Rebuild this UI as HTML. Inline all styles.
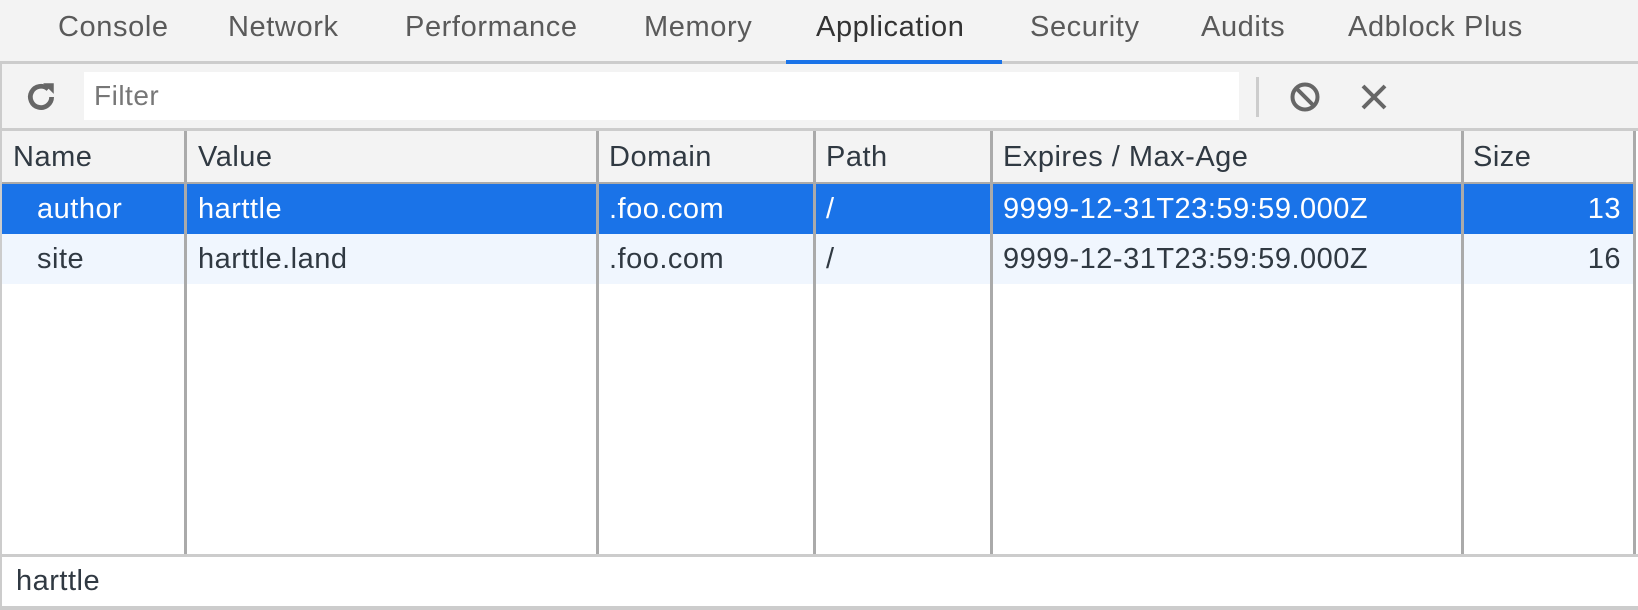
<!DOCTYPE html>
<html><head><style>
*{margin:0;padding:0;box-sizing:border-box}
body{width:1638px;height:610px;background:#fff;font-family:"Liberation Sans",sans-serif;position:relative;overflow:hidden;color:#303942}
.a{position:absolute}
.tab{position:absolute;top:11px;font-size:29px;letter-spacing:0.6px;color:#5a5a5a;white-space:nowrap}
.t{position:absolute;font-size:29px;letter-spacing:0.5px;white-space:nowrap;line-height:50px}
.vl{position:absolute;top:131px;width:3px;height:424px;background:#aaa}
</style></head><body>
<div class="a" style="left:0;top:0;width:1638px;height:61px;background:#f3f3f3"></div>
<div class="tab" style="left:58px">Console</div>
<div class="tab" style="left:228px">Network</div>
<div class="tab" style="left:405px">Performance</div>
<div class="tab" style="left:644px">Memory</div>
<div class="tab" style="left:816px;color:#333">Application</div>
<div class="tab" style="left:1030px">Security</div>
<div class="tab" style="left:1201px">Audits</div>
<div class="tab" style="left:1348px">Adblock Plus</div>
<div class="a" style="left:0;top:61px;width:1638px;height:3px;background:#ccc"></div>
<div class="a" style="left:786px;top:60px;width:216px;height:4px;background:#1a73e8"></div>
<div class="a" style="left:0;top:64px;width:1638px;height:64px;background:#f3f3f3;border-left:2px solid #ccc"></div>
<svg class="a" style="left:24px;top:80px" width="34" height="34" viewBox="0 0 32 32"><path d="M26 16a10 10 0 1 1-3.2-7.4" fill="none" stroke="#666" stroke-width="4.5"/><path d="M18 3h10v10z" fill="#666"/></svg>
<div class="a" style="left:84px;top:72px;width:1155px;height:48px;background:#fff"></div>
<div class="a" style="left:94px;top:72px;font-size:28px;letter-spacing:0.5px;line-height:48px;color:#777">Filter</div>
<div class="a" style="left:1256px;top:77px;width:3px;height:40px;background:#ccc"></div>
<svg class="a" style="left:1289px;top:81px" width="32" height="32" viewBox="0 0 32 32"><circle cx="16" cy="16" r="12.5" fill="none" stroke="#666" stroke-width="4"/><path d="M8 8l16 16" stroke="#666" stroke-width="4"/></svg>
<svg class="a" style="left:1360px;top:83px" width="28" height="28" viewBox="0 0 28 28"><path d="M3 3l22 22M25 3L3 25" stroke="#666" stroke-width="4"/></svg>
<div class="a" style="left:0;top:128px;width:1638px;height:3px;background:#ccc"></div>
<div class="a" style="left:0;top:131px;width:1635px;height:51px;background:#f3f3f3"></div>
<div class="a" style="left:0;top:182px;width:1635px;height:2px;background:#aaa"></div>
<div class="a" style="left:0;top:184px;width:1635px;height:50px;background:#1a73e8"></div>
<div class="a" style="left:0;top:234px;width:1635px;height:50px;background:#f0f6fe"></div>
<div class="a" style="left:0;top:131px;width:2px;height:424px;background:#ccc"></div>
<div class="vl" style="left:184px"></div>
<div class="vl" style="left:596px"></div>
<div class="vl" style="left:813px"></div>
<div class="vl" style="left:990px"></div>
<div class="vl" style="left:1461px"></div>
<div class="vl" style="left:1633px"></div>
<div class="t" style="left:13px;top:132px">Name</div>
<div class="t" style="left:198px;top:132px">Value</div>
<div class="t" style="left:609px;top:132px">Domain</div>
<div class="t" style="left:826px;top:132px">Path</div>
<div class="t" style="left:1003px;top:132px">Expires / Max-Age</div>
<div class="t" style="left:1473px;top:132px">Size</div>
<div style="color:#fff">
<div class="t" style="left:37px;top:184px">author</div>
<div class="t" style="left:198px;top:184px">harttle</div>
<div class="t" style="left:609px;top:184px">.foo.com</div>
<div class="t" style="left:826px;top:184px">/</div>
<div class="t" style="left:1003px;top:184px">9999-12-31T23:59:59.000Z</div>
<div class="t" style="left:1480px;top:184px;width:141px;text-align:right">13</div>
</div>
<div class="t" style="left:37px;top:234px">site</div>
<div class="t" style="left:198px;top:234px">harttle.land</div>
<div class="t" style="left:609px;top:234px">.foo.com</div>
<div class="t" style="left:826px;top:234px">/</div>
<div class="t" style="left:1003px;top:234px">9999-12-31T23:59:59.000Z</div>
<div class="t" style="left:1480px;top:234px;width:141px;text-align:right">16</div>
<div class="a" style="left:0;top:554px;width:1638px;height:3px;background:#ccc"></div>
<div class="a" style="left:0;top:557px;width:2px;height:50px;background:#ccc"></div>
<div class="t" style="left:16px;top:556px">harttle</div>
<div class="a" style="left:0;top:606px;width:1638px;height:4px;background:#ccc"></div>
</body></html>
